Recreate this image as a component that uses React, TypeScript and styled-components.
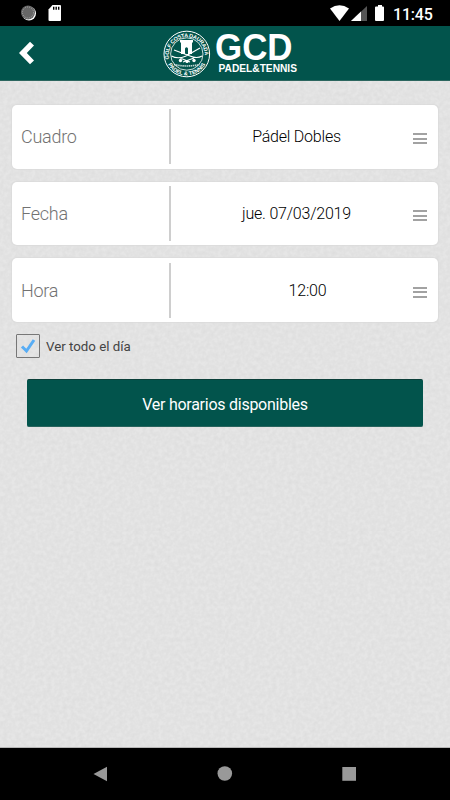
import React, { useState } from "react";
import styled, { createGlobalStyle } from "styled-components";

const grain = `url("data:image/svg+xml,%3Csvg xmlns='http://www.w3.org/2000/svg' width='225' height='225'%3E%3Cfilter id='n'%3E%3CfeTurbulence type='fractalNoise' baseFrequency='.25' numOctaves='2' stitchTiles='stitch'/%3E%3CfeColorMatrix values='0 0 0 0 0 0 0 0 0 0 0 0 0 0 0 .065 0 0 0 -.018'/%3E%3C/filter%3E%3Crect width='225' height='225' filter='url(%23n)'/%3E%3C/svg%3E")`;

const GlobalStyle = createGlobalStyle`
  * { box-sizing: border-box; }
  body { margin: 0; background: #000; font-family: Roboto, sans-serif; }
  button { font-family: inherit; border: 0; padding: 0; background: none; }
`;

const Screen = styled.div`
  width: 450px;
  height: 800px;
  display: flex;
  flex-direction: column;
  overflow: hidden;
`;

const StatusBar = styled.div`
  height: 26px;
  flex: none;
  display: flex;
  align-items: center;
  justify-content: space-between;
  padding: 0 17px 0 20px;
  background: #000;
  color: #fff;
`;

const StatusGroup = styled.div`
  display: flex;
  align-items: center;
`;

const Clock = styled.span`
  font-size: 16px;
  letter-spacing: -0.2px;
  line-height: 20px;
  font-weight: 500;
  margin: 3px 0 0 8px;
  width: 40px;
  white-space: nowrap;
`;

const Header = styled.header`
  height: 55px;
  flex: none;
  display: grid;
  grid-template-columns: 163px 1fr;
  background: #02544c;
  border-bottom: 1px solid #2c665f;
`;

const BackButton = styled.button`
  display: flex;
  align-items: center;
  padding: 0 0 0 19px;
  svg { display: block; }
`;

const Brand = styled.div`
  display: flex;
  gap: 5px;
  padding-top: 4px;
  color: #fff;
  svg { flex: none; overflow: visible; }
`;

const BrandName = styled.svg`
  display: block;
`;

const Content = styled.main`
  flex: 1;
  display: flex;
  flex-direction: column;
  padding: 24px 12px 0;
  background: #e6e6e6 ${grain};
  border-bottom: 1px solid #b5b5b5;
`;

const Fields = styled.div`
  display: flex;
  flex-direction: column;
  gap: 13px;
`;

const Field = styled.div`
  height: 63.7px;
  display: grid;
  grid-template-columns: 157px 2px 1fr 36px;
  align-items: center;
  background: #fff;
  border-radius: 5px;
  box-shadow: 0 0 1px 0.5px #dcdcdc;
`;

const Label = styled.span`
  padding-left: 9px;
  padding-top: 1px;
  font-size: 18px;
  letter-spacing: -0.25px;
  line-height: 22px;
  font-weight: 300;
  color: #727272;
`;

const Divider = styled.i`
  height: 55px;
  background: #cecece;
`;

const Value = styled.span<{ $shift?: number }>`
  padding-left: ${(p) => 20 + (p.$shift ?? 0)}px;
  padding-top: 1px;
  text-align: center;
  font-size: 16px;
  letter-spacing: -0.22px;
  line-height: 22px;
  font-weight: 300;
  color: #000;
`;

const MenuLines = styled.span`
  width: 14px;
  height: 11px;
  margin: 4px 0 0 11px;
  display: flex;
  flex-direction: column;
  justify-content: space-between;
  i { height: 2px; background: #a2a2a2; }
`;

const CheckRow = styled.label`
  height: 24px;
  display: flex;
  align-items: center;
  gap: 6px;
  margin: 12px 0 0 4px;
  font-size: 13.3px;
  line-height: 24px;
  color: #444;
  span { padding-top: 1px; }
`;

const CheckBox = styled.button`
  width: 24px;
  height: 24px;
  display: block;
  border: 1px solid #777;
  border-radius: 1px;
  svg { display: block; }
`;

const SubmitButton = styled.button`
  height: 48px;
  margin: 21px 15px 0;
  border-radius: 2px;
  border-top: 1px solid #0b3f39;
  border-bottom: 1px solid #28645d;
  background: #02544c;
  color: #fff;
  font-size: 16px;
  letter-spacing: -0.26px;
  line-height: 22px;
  padding-top: 4px;
`;

const NavBar = styled.nav`
  height: 52px;
  flex: none;
  display: flex;
  justify-content: space-between;
  align-items: center;
  padding: 0 92px;
  background: #000;
`;

const Emblem = () => (
  <svg width="48" height="48" viewBox="0 0 48 48" fill="none" stroke="#fff">
    <circle cx="23.8" cy="24" r="22.8" strokeWidth="1" />
    <circle cx="23.8" cy="24" r="16.2" strokeWidth=".8" />
    <defs>
      <path id="ring-top" d="M6.2 29a18 18 0 1 1 35.2 0" />
      <path id="ring-bottom" d="M3.500 31.200a21.600 21.600 0 0 0 40.600 0" />
    </defs>
    <g fill="#fff" stroke="none" fontFamily="Liberation Sans, sans-serif" fontWeight="700">
      <text fontSize="5.5" textLength="60"><textPath href="#ring-top">GOLF COSTA DAURADA</textPath></text>
      <text fontSize="5.5"><textPath href="#ring-bottom" startOffset="50%" textAnchor="middle">PADEL &amp; TENNIS</textPath></text>
    </g>
    <path fill="#fff" stroke="none" d="M17 10h13v2l-1 1v11h-4v-5.5q-1.5-2.5-3 0V24h-4V13l-1-1z" />
    <path strokeWidth="1.1" d="M8.5 26q6 3.5 14 .2L37 18M39 26q-5 3-12 0L11 20M17 28l10 4M31 28l-11 4" />
    <circle cx="17.5" cy="30.5" r="1.7" fill="#fff" stroke="none" />
    <circle cx="31" cy="30.5" r="1.7" fill="#fff" stroke="none" />
    <circle cx="24" cy="31.5" r="1.6" fill="#fff" stroke="none" />
    <path strokeWidth="1.7" strokeDasharray="1.5 .6" opacity=".75" d="M11 34.5q13 3 25.500 0" />
  </svg>
);

const fields = [
  { label: "Cuadro", value: "Pádel Dobles" },
  { label: "Fecha", value: "jue. 07/03/2019" },
  { label: "Hora", value: "12:00", shift: 22 },
];

export default function App() {
  const [allDay, setAllDay] = useState(true);
  return (
    <>
      <GlobalStyle />
      <Screen>
        <StatusBar>
          <StatusGroup>
            <svg width="43" height="18" viewBox="0 0 43 18">
              <circle cx="9" cy="9.5" r="7" fill="#fff" />
              <circle cx="8" cy="8.5" r="7" fill="#666" />
              <circle cx="8" cy="8.5" r="5.5" fill="none" stroke="#aaa" strokeDasharray="1 1.2" />
              <path fill="#fff" d="M32.5 1H40q1 0 1 1v14q0 1-1 1H29.500q-1 0-1-1V5.500z" />
              <path stroke="#000" strokeWidth="1.4" d="M33.700 2.800v3M36.200 2.800v3M38.700 2.800v3" />
            </svg>
          </StatusGroup>
          <StatusGroup>
            <svg width="56" height="18" viewBox="0 0 56 18">
              <path fill="#fff" d="M1 4.500Q10.500-2 20 4.500L10.500 17z" />
              <path fill="#555" d="M38 2v15H22z" />
              <path fill="#fff" d="M32 7.500V17H22z" />
              <path fill="#fff" d="M49 1h4v1.500h1q1 0 1 1V16q0 1-1 1h-7q-1 0-1-1V3.500q0-1 1-1h2z" />
            </svg>
            <Clock>11:45</Clock>
          </StatusGroup>
        </StatusBar>
        <Header>
          <BackButton aria-label="Atrás">
            <svg width="16" height="24" viewBox="0 0 16 24">
              <path fill="#fff" d="M0 12 11 .8 15 4.500 7.800 12 15 19.500 11 23.200z" />
            </svg>
          </BackButton>
          <Brand>
            <Emblem />
            <BrandName width="84" height="46" fill="#fff" fontFamily="Liberation Sans, sans-serif" fontWeight="700">
              <text x="-1" y="29.500" fontSize="36" textLength="77.500" lengthAdjust="spacingAndGlyphs">GCD</text>
              <text x="2.500" y="42" fontSize="10.800" textLength="78.500" lengthAdjust="spacingAndGlyphs">PADEL&amp;TENNIS</text>
            </BrandName>
          </Brand>
        </Header>
        <Content>
          <Fields>
            {fields.map((f) => (
              <Field key={f.label}>
                <Label>{f.label}</Label>
                <Divider />
                <Value $shift={f.shift}>{f.value}</Value>
                <MenuLines><i /><i /><i /></MenuLines>
              </Field>
            ))}
          </Fields>
          <CheckRow>
            <CheckBox role="checkbox" aria-checked={allDay} onClick={() => setAllDay(!allDay)}>
              <svg width="22" height="22" viewBox="0 0 22 22">
                {allDay && <path fill="none" stroke="#58adf5" strokeWidth="3" d="M5 11.500 9.500 16 17 5" />}
              </svg>
            </CheckBox>
            <span>Ver todo el día</span>
          </CheckRow>
          <SubmitButton>Ver horarios disponibles</SubmitButton>
        </Content>
        <NavBar>
          <svg width="16" height="16" viewBox="0 0 16 16"><path fill="#999" d="M1.500 8 15 .7v14.600z" /></svg>
          <svg width="16" height="16" viewBox="0 0 16 16"><circle cx="7.800" cy="7.500" r="7.300" fill="#999" /></svg>
          <svg width="16" height="16" viewBox="0 0 16 16"><path fill="#999" d="M.3 1H14v13.800H.3z" /></svg>
        </NavBar>
      </Screen>
    </>
  );
}
